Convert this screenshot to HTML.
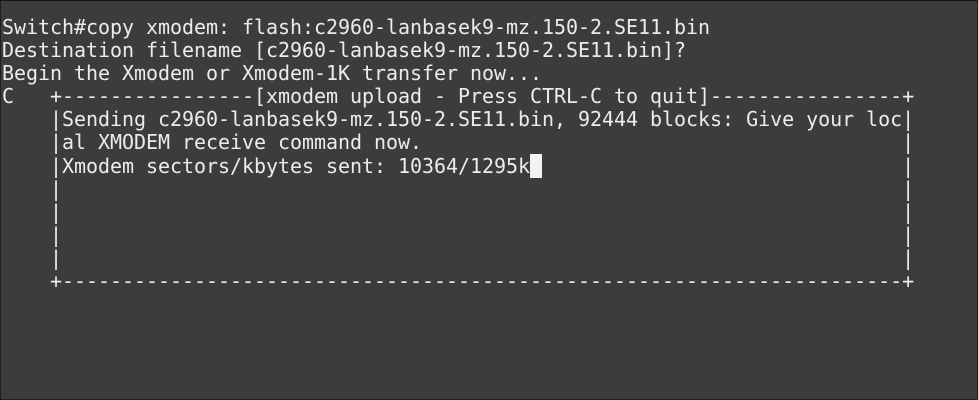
<!DOCTYPE html>
<html><head><style>
html,body{margin:0;padding:0;}
body{width:978px;height:400px;background:#3c3c3c;overflow:hidden;position:relative;}
.b{position:absolute;inset:0;border:1px solid #1e1e1e;border-top-color:#151515;box-sizing:border-box;}
pre{margin:0;position:absolute;left:2px;top:16px;font-family:"DejaVu Sans Mono","Liberation Mono",monospace;font-size:20px;line-height:23.1px;color:#ececec;letter-spacing:-0.04px;}
.cur{background:#f2f2f2;color:#3c3c3c;}
</style></head><body><div class="b"></div>
<pre>Switch#copy xmodem: flash:c2960-lanbasek9-mz.150-2.SE11.bin
Destination filename [c2960-lanbasek9-mz.150-2.SE11.bin]?
Begin the Xmodem or Xmodem-1K transfer now...
C   +----------------[xmodem upload - Press CTRL-C to quit]----------------+
    |Sending c2960-lanbasek9-mz.150-2.SE11.bin, 92444 blocks: Give your loc|
    |al XMODEM receive command now.                                        |
    |Xmodem sectors/kbytes sent: 10364/1295k<span class="cur"> </span>                              |
    |                                                                      |
    |                                                                      |
    |                                                                      |
    |                                                                      |
    +----------------------------------------------------------------------+</pre>
</body></html>
